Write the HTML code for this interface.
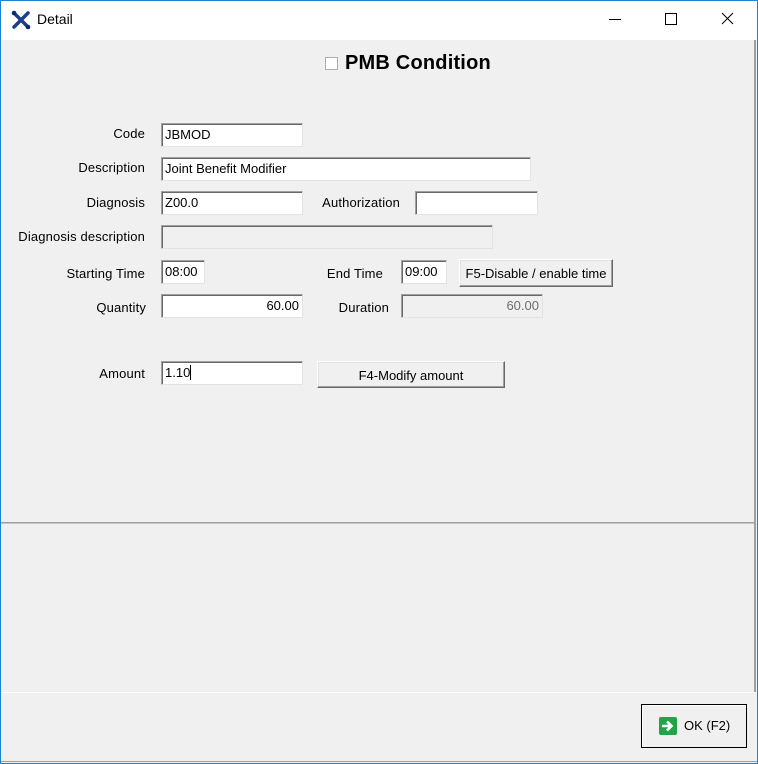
<!DOCTYPE html>
<html><head><meta charset="utf-8"><style>
*{margin:0;padding:0;box-sizing:border-box}
body{width:758px;height:764px;overflow:hidden;background:#f0f0f0;font-family:"Liberation Sans",sans-serif;font-size:13px;color:#000;position:relative}
.frame{position:absolute;left:0;top:0;width:758px;height:764px;border:1px solid #1883d7}
.title{position:absolute;left:1px;top:1px;width:756px;height:39px;background:#fff}
.a{position:absolute}
.lbl{position:absolute;text-align:right;white-space:nowrap;letter-spacing:0.15px}
.f{position:absolute;background:#fff;border-top:1px solid #a0a0a0;border-left:1px solid #a0a0a0;border-right:1px solid #e3e3e3;border-bottom:1px solid #e3e3e3;box-shadow:inset 1px 1px 0 #696969;padding:3px 0 0 3px;white-space:nowrap;letter-spacing:0px}
.f.dis{background:#f0f0f0}
.r{text-align:right;padding-right:3px}
.btn{position:absolute;background:#f0f0f0;border-top:1px solid #fff;border-left:1px solid #fff;border-right:1px solid #696969;border-bottom:1px solid #696969;box-shadow:inset -1px -1px 0 #a0a0a0,inset 1px 1px 0 #e3e3e3;text-align:center;white-space:nowrap;letter-spacing:0px}
</style></head><body>
<div class="title"></div>
<svg class="a" style="left:11px;top:10px" width="20" height="20" viewBox="0 0 20 20"><path d="M3 3 L17 17 M17 3 L3 17" stroke="#1d3f8a" stroke-width="3.5" stroke-linecap="round"/><circle cx="3" cy="3" r="2.3" fill="#0d2a6e"/><circle cx="17" cy="17" r="2.3" fill="#0d2a6e"/></svg>
<div class="a" style="left:37px;top:11px;font-size:14px">Detail</div>
<svg class="a" style="left:600px;top:0" width="158" height="40"><path d="M9 19.5h12" stroke="#000"/><rect x="65.5" y="13.5" width="11" height="11" fill="none" stroke="#000"/><path d="M122 13l11 11M133 13l-11 11" stroke="#000"/></svg>
<div class="frame"></div>
<div class="a" style="left:754px;top:40px;width:2px;height:652px;background:#a0a0a0"></div>
<svg class="a" style="left:325px;top:57px" width="13" height="13"><rect x="0.5" y="0.5" width="12" height="12" fill="#fff" stroke="#adadad"/></svg>
<div class="a" style="left:345px;top:52px;font-size:20px;font-weight:bold;letter-spacing:0.2px">PMB Condition</div>

<div class="lbl" style="right:613px;top:126px">Code</div>
<div class="f" style="left:161px;top:123px;width:142px;height:24px">JBMOD</div>
<div class="lbl" style="right:613px;top:160px">Description</div>
<div class="f" style="left:161px;top:157px;width:370px;height:24px">Joint Benefit Modifier</div>
<div class="lbl" style="right:613px;top:195px">Diagnosis</div>
<div class="f" style="left:161px;top:191px;width:142px;height:24px">Z00.0</div>
<div class="lbl" style="right:358px;top:195px">Authorization</div>
<div class="f" style="left:415px;top:191px;width:123px;height:24px"></div>
<div class="lbl" style="right:613px;top:229px">Diagnosis description</div>
<div class="f dis" style="left:161px;top:225px;width:332px;height:24px"></div>
<div class="lbl" style="right:613px;top:266px">Starting Time</div>
<div class="f" style="left:161px;top:260px;width:44px;height:24px">08:00</div>
<div class="lbl" style="right:375px;top:266px">End Time</div>
<div class="f" style="left:401px;top:260px;width:46px;height:24px">09:00</div>
<div class="btn" style="left:459px;top:259px;width:154px;height:28px;padding-top:6px">F5-Disable / enable time</div>
<div class="lbl" style="right:612px;top:300px">Quantity</div>
<div class="f r" style="left:161px;top:294px;width:142px;height:24px">60.00</div>
<div class="lbl" style="right:369px;top:300px">Duration</div>
<div class="f r dis" style="left:401px;top:294px;width:142px;height:24px;color:#6d6d6d">60.00</div>
<div class="lbl" style="right:613px;top:366px">Amount</div>
<div class="f" style="left:161px;top:361px;width:142px;height:24px">1.10<span style="border-left:1px solid #000"></span></div>
<div class="btn" style="left:317px;top:361px;width:188px;height:27px;padding-top:6px">F4-Modify amount</div>

<div class="a" style="left:1px;top:522px;width:753px;height:1px;background:#a0a0a0"></div>
<div class="a" style="left:1px;top:523px;width:753px;height:1px;background:#c8c8c8"></div>
<div class="a" style="left:1px;top:692px;width:756px;height:1px;background:#fff"></div>
<div class="a" style="left:1px;top:761px;width:756px;height:1px;background:#a0a0a0"></div>

<div class="a" style="left:641px;top:704px;width:106px;height:44px;border:1px solid #000;background:#f0f0f0;box-shadow:inset 1px 1px 0 #fff"></div>
<svg class="a" style="left:659px;top:717px" width="18" height="18"><rect x="0" y="0" width="18" height="18" rx="2" fill="#21a348"/><path d="M3 9h9M8 4.5L12.5 9 8 13.5" stroke="#fff" stroke-width="2.6" fill="none"/></svg>
<div class="a" style="left:684px;top:718px;font-size:13px">OK (F2)</div>
</body></html>
